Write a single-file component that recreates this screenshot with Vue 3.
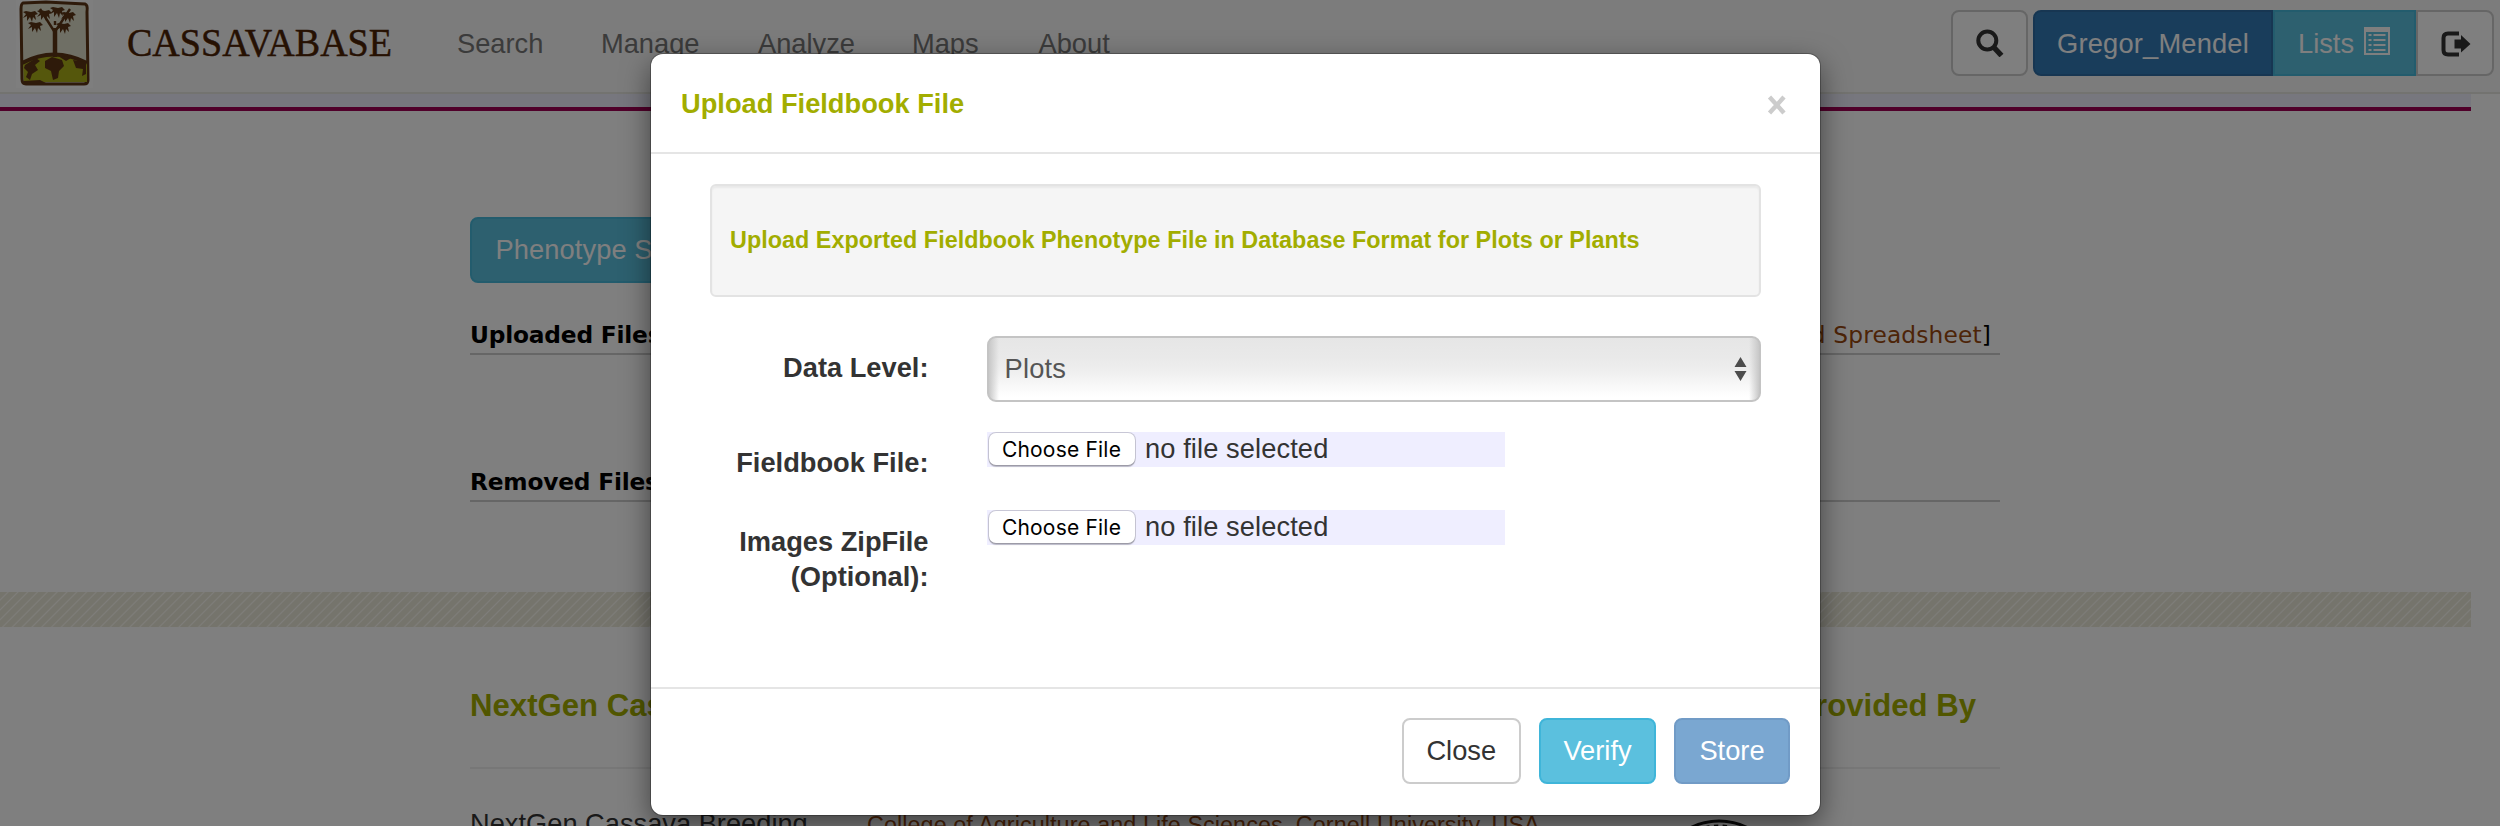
<script setup>
const navItems = [
  { label: 'Search', cls: 'n1' },
  { label: 'Manage', cls: 'n2' },
  { label: 'Analyze', cls: 'n3' },
  { label: 'Maps', cls: 'n4' },
  { label: 'About', cls: 'n5' },
]
const leaves = [
  [15, 15], [29, 14], [42, 11], [53, 16], [20, 26], [48, 27],
]
const uploads = [
  { lines: ['Fieldbook File:'] },
  { lines: ['Images ZipFile', '(Optional):'] },
]
</script>

<template>
  <div class="page">
    <header class="navbar">
      <svg class="logo" viewBox="0 0 77 88" width="77" height="88">
        <rect width="77" height="88" fill="#fdfdfd" />
        <path d="M7 3 L30 2 L69 4 Q72 5 71 12 L72 80 Q72 84 68 84 L10 84 Q6 84 6 79 L5 9 Q5 4 7 3Z" fill="#dedecb" stroke="#5c3514" stroke-width="3" />
        <path d="M7 63 Q38 46 71 62 L71 82 L8 82Z" fill="#abae18" />
        <path d="M6 63 Q38 46 71 63" fill="none" stroke="#5c3514" stroke-width="4" />
        <path d="M39 57 V28" fill="none" stroke="#5c3514" stroke-width="4.500" />
        <path d="M38 31 L24 9 M40 30 L54 9 M39 25 V21" fill="none" stroke="#5c3514" stroke-width="2.400" />
        <g v-for="(l, i) in leaves" :key="i" :transform="`translate(${l[0]} ${l[1]})`">
          <path d="M-5 -4 L0 -3 L4 -4 L7 -1 L4 0 L5 5 L2 2 L1 7 L-1 2 L-4 6 L-4 1 L-8 3 L-5 -1 L-8 -3Z" fill="#5c3514" />
        </g>
        <path d="M9 65 L20 58 L24 61 L19 65 L22 70 L16 74 L14 80 L10 77 L12 72 L8 68Z M29 61 L36 57 L46 60 L48 66 L43 71 L42 78 L37 80 L35 71 L29 68Z M57 60 L70 62 L70 74 L66 76 L67 69 L60 68Z M8 81 L24 80 L30 83 L8 84Z M42 56 L55 58 L50 61Z" fill="#5c3514" />
      </svg>
      <svg class="wordmark" width="272" height="60" viewBox="0 0 272 60">
        <text x="0" y="38" textLength="265" lengthAdjust="spacingAndGlyphs">CASSAVABASE</text>
      </svg>
      <nav class="menu">
        <a v-for="n in navItems" :key="n.label" :class="n.cls">{{ n.label }}</a>
      </nav>
      <div class="tools">
        <button class="tool search">
          <svg width="28" height="28" viewBox="0 0 28 28">
            <circle cx="11.3" cy="11.500" r="9" fill="none" stroke="#333" stroke-width="4" />
            <path d="M17.500 18 L25.500 26.500" stroke="#333" stroke-width="5.400" />
          </svg>
        </button>
        <button class="tool user">Gregor_Mendel</button>
        <button class="tool lists">Lists
          <svg width="26" height="28" viewBox="0 0 26 28">
            <path d="M0 0H26V28H0Z M2 5V26H24V5Z" fill="#fff" fill-rule="evenodd" />
            <path d="M4.500 8h3M9.500 8h12M4.500 13h3M9.500 13h12M4.500 18h3M9.500 18h12M4.500 23h3M9.500 23h12" stroke="#fff" stroke-width="2" />
          </svg>
        </button>
        <button class="tool logout">
          <svg width="30" height="28" viewBox="0 0 30 28">
            <path d="M18 3.500H7Q2.500 3.500 2.500 8V20Q2.500 24.500 7 24.500H18" fill="none" stroke="#333" stroke-width="4" />
            <path d="M13.500 9.500H20V5L29.500 14L20 22.500V18.500H13.500Z" fill="#333" />
          </svg>
        </button>
      </div>
    </header>
    <div class="band"></div>

    <main class="content">
      <button class="pheno">Phenotype Spreadsheet</button>
      <div class="section uploaded">
        <b>Uploaded Files</b>
        <span>[<a>Upload Spreadsheet</a>]</span>
      </div>
      <div class="section removed"><b>Removed Files</b></div>
    </main>

    <div class="stripes"></div>

    <footer class="foot">
      <div class="foot-head">
        <span>NextGen Cassava</span>
        <span>Provided By</span>
      </div>
      <div class="foot-body">
        <span class="project">NextGen Cassava Breeding</span>
        <a class="college">College of Agriculture and Life Sciences, Cornell University, USA</a>
        <svg class="seal" width="130" height="130" viewBox="0 0 130 130">
          <circle cx="65" cy="65" r="62" fill="none" stroke="#111" stroke-width="3" />
          <circle cx="65" cy="65" r="52" fill="none" stroke="#111" stroke-width="13" stroke-dasharray="4 4" />
        </svg>
      </div>
    </footer>

    <div class="backdrop"></div>

    <section class="modal">
      <div class="modal-head">
        <h4>Upload Fieldbook File</h4>
        <svg width="20" height="20" viewBox="0 0 20 20">
          <path d="M2.500 2L17 18M17 2L2.500 18" stroke="#ccc" stroke-width="4.400" />
        </svg>
      </div>
      <div class="modal-body">
        <div class="well">Upload Exported Fieldbook Phenotype File in Database Format for Plots or Plants</div>
        <div class="row level">
          <label>Data Level:</label>
          <div class="select">
            <span>Plots</span>
            <svg width="13" height="26" viewBox="0 0 13 26">
              <path d="M0.500 11L6.500 1L12.500 11Z M0.500 15L6.500 25L12.500 15Z" fill="#4d4d4d" />
            </svg>
          </div>
        </div>
        <div v-for="(u, i) in uploads" :key="i" class="row file-row">
          <label><span v-for="l in u.lines" :key="l">{{ l }}</span></label>
          <div class="file">
            <button>Choose File</button>
            <span>no file selected</span>
          </div>
        </div>
      </div>
      <div class="modal-foot">
        <button class="btn close">Close</button>
        <button class="btn verify">Verify</button>
        <button class="btn store">Store</button>
      </div>
    </section>
  </div>
</template>

<style>
html, body { margin: 0; overflow: hidden; background: #fff; }
</style>

<style scoped>
.page {
  position: relative;
  width: 2500px;
  height: 826px;
  overflow: hidden;
  background: #fff;
  font-family: "Liberation Sans", Arial, sans-serif;
  font-size: 27.25px;
  color: #333;
}
.page * { box-sizing: border-box; }
button { font: inherit; margin: 0; padding: 0; }
svg { display: block; }

.navbar {
  display: flex;
  height: 94px;
  background: #f8f8f8;
  border-bottom: 2px solid #e7e7e0;
}
.logo { margin-left: 16px; flex: none; }
.wordmark { margin: 18px 0 0 34px; flex: none; overflow: visible; }
.wordmark text { font-family: "Liberation Serif", serif; font-size: 41px; fill: #4c2204; stroke: #4c2204; stroke-width: .5px; }
.menu { display: flex; flex: none; margin-left: 58px; line-height: 88px; color: #777; }
.menu a { flex: none; }
.n1 { width: 144px; }
.n2 { width: 157px; }
.n3 { width: 154px; }
.n4 { width: 126.500px; }
.tools { display: flex; margin: 10px 6.500px 0 auto; }
.tool {
  height: 66px;
  display: flex;
  align-items: center;
  justify-content: center;
  border: 2px solid #ccc;
  border-radius: 8px;
  background: #fff;
  color: #fff;
}
.search { width: 77px; margin-right: 5px; padding-left: 2px; }
.user { width: 240px; padding: 2px 0 0 1px; background: #337ab7; border-color: #2e6da4; border-radius: 8px 0 0 8px; letter-spacing: .2px; }
.lists { width: 143px; padding-top: 2px; background: #5bc0de; border-color: #46b8da; border-radius: 0; gap: 10px; }
.lists svg { margin-top: -6px; }
.logout { width: 78px; padding: 2px 0 0 2px; border-radius: 0 8px 8px 0; }

.band {
  width: 2471px;
  height: 17px;
  background: #efeffd;
  border-bottom: 4px solid #a00055;
}

.content {
  width: 1530px;
  height: 481px;
  margin-left: 470px;
  padding-top: 106px;
}
.pheno {
  display: block;
  width: 340px;
  height: 66px;
  padding-left: 23.500px;
  text-align: left;
  color: #fff;
  letter-spacing: .1px;
  background: #5bc0de;
  border: 2px solid #46b8da;
  border-radius: 8px;
}
.section {
  display: flex;
  justify-content: space-between;
  border-bottom: 2px solid #ccc;
  height: 40px;
  line-height: 40px;
  font-family: "DejaVu Sans", Verdana, sans-serif;
  font-size: 23.300px;
  color: #000;
}
.section b { letter-spacing: -.2px; }
.section a { color: #9a480e; }
.section span { padding-right: 9px; letter-spacing: .15px; }
.uploaded { margin-top: 32px; }
.removed { margin-top: 107px; }

.stripes {
  width: 2471px;
  height: 35px;
  background: repeating-linear-gradient(135deg, #ebe8d8 0, #ebe8d8 4.600px, #fcfbf4 5.800px, #ebe8d8 6.930px);
}

.foot { width: 1530px; margin-left: 470px; }
.foot-head {
  display: flex;
  justify-content: space-between;
  height: 142px;
  padding: 58px 24px 0 0;
  line-height: 42px;
  font-size: 31.150px;
  font-weight: bold;
  color: #a2ad00;
  border-bottom: 2px solid #eee;
}
.foot-body { display: flex; height: 90px; }
.project { width: 397px; margin-top: 39px; line-height: 32px; flex: none; }
.college { margin-top: 39px; width: 787px; line-height: 34px; font-size: 23.360px; letter-spacing: .07px; color: #9a480e; flex: none; }
.seal { margin-top: 49px; flex: none; }

.backdrop { position: absolute; inset: 0; background: rgba(0, 0, 0, .5); }

.modal {
  position: absolute;
  left: 651px;
  top: 54px;
  width: 1168.500px;
  height: 760.500px;
  display: flex;
  flex-direction: column;
  background: #fff;
  background-clip: padding-box;
  border-radius: 12px;
  box-shadow: 0 0 0 1px rgba(0, 0, 0, .25), 0 10px 29px rgba(0, 0, 0, .5);
}
.modal-head {
  display: flex;
  justify-content: space-between;
  align-items: center;
  height: 100px;
  padding: 0 33px 0 30px;
  border-bottom: 2px solid #e5e5e5;
}
.modal-head h4 { margin: 2px 0 0; font-size: 27.250px; color: #a2ad00; }
.modal-head svg { margin-top: 3px; }
.modal-body { flex: 1; padding: 29.500px 58.500px 0 59px; }
.well {
  height: 113px;
  line-height: 109px;
  padding-left: 18px;
  white-space: nowrap;
  font-size: 23.360px;
  font-weight: bold;
  letter-spacing: .03px;
  color: #a2ad00;
  background: #f5f5f5;
  border: 2px solid #e3e3e3;
  border-radius: 6px;
  box-shadow: inset 0 2px 2px rgba(0, 0, 0, .05);
}
.row { display: flex; }
.row label { width: 218.500px; margin-right: 58.500px; flex: none; text-align: right; font-weight: bold; }
.row label span { display: block; }
.level { margin-top: 39.500px; }
.level label { line-height: 64px; }
.select {
  flex: 1;
  height: 66px;
  display: flex;
  justify-content: space-between;
  align-items: center;
  padding: 0 12px 0 15.500px;
  color: #555;
  letter-spacing: .2px;
  border: 2px solid #c4c4c4;
  border-radius: 9px;
  background:
    linear-gradient(90deg, #c8c8c8, rgba(230, 230, 230, 0) 10px, rgba(230, 230, 230, 0) calc(100% - 10px), #c8c8c8),
    linear-gradient(#e6e6e6, #e9e9e9 30%, #eee 52%, #fff 95%);
}
.file-row { margin-top: 29.500px; height: 49px; }
.file-row label { padding-top: 13.500px; line-height: 35.300px; }
.file {
  width: 517.500px;
  height: 35px;
  display: flex;
  background: #efeeff;
  line-height: 33px;
  letter-spacing: .1px;
}
.file button {
  width: 146px;
  height: 32px;
  margin: 1px 10.500px 0 1.500px;
  line-height: 33px;
  font-family: Inter, sans-serif;
  font-size: 21px;
  letter-spacing: .2px;
  color: #000;
  background: #fff;
  border: 0;
  border-radius: 7px;
  box-shadow: 0 0 0 1px rgba(0, 0, 0, .16), 0 2px 1px rgba(0, 0, 0, .22);
}
.modal-foot {
  display: flex;
  height: 127.500px;
  padding: 29px 29.500px 0 0;
  gap: 18px;
  justify-content: flex-end;
  border-top: 2px solid #e5e5e5;
}
.btn { height: 66px; border-radius: 8px; color: #fff; }
.close { width: 119.500px; color: #333; background: #fff; border: 2px solid #ccc; }
.verify { width: 117px; background: #5bc0de; border: 2px solid #3fb5d9; }
.store { width: 116px; background: #7aa7d1; border: 2px solid #719bc6; }
</style>
